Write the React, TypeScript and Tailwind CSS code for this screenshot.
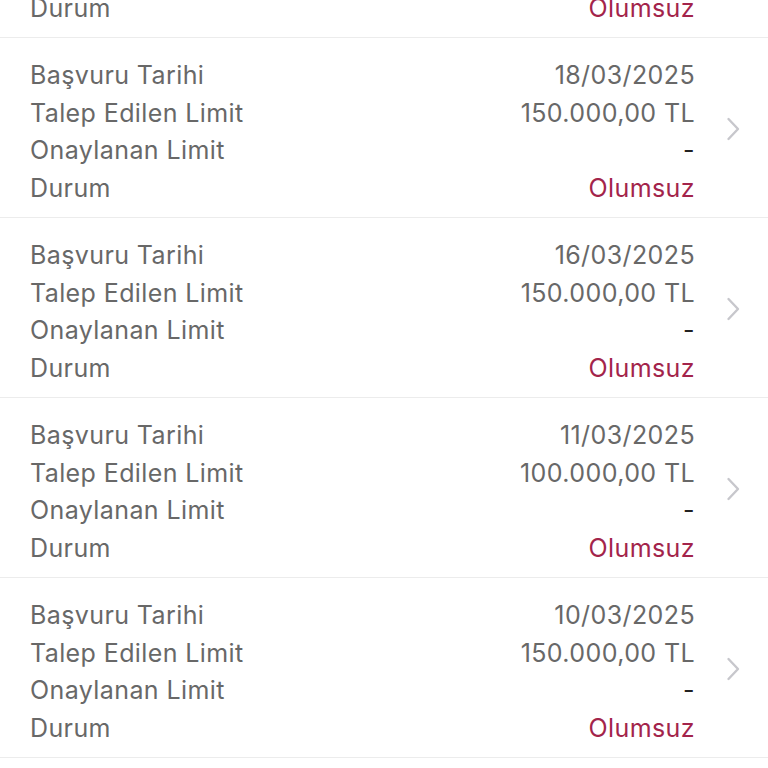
import React from "react";

type Item = { date: string; requested: string };

const items: Item[] = [
  { date: "20/03/2025", requested: "150.000,00 TL" },
  { date: "18/03/2025", requested: "150.000,00 TL" },
  { date: "16/03/2025", requested: "150.000,00 TL" },
  { date: "11/03/2025", requested: "100.000,00 TL" },
  { date: "10/03/2025", requested: "150.000,00 TL" },
];

function Chevron() {
  return (
    <svg width="16" height="24" viewBox="0 0 16 24" fill="none">
      <path d="M3.5 2 L13 12 L3.5 22" stroke="#c7c7cc" strokeWidth="2.4" strokeLinecap="round" strokeLinejoin="round" />
    </svg>
  );
}

function Row({ item }: { item: Item }) {
  return (
    <div className="flex items-center border-b border-[#ececec] bg-white pl-[30px]">
      <div className="flex-1 pt-[19px] pb-[10px] text-[25px] leading-[37.5px] tracking-[0.4px]">
        <div className="flex justify-between">
          <span className="text-[#686868]">Başvuru Tarihi</span>
          <span className="text-[#686868]">{item.date}</span>
        </div>
        <div className="flex justify-between">
          <span className="text-[#686868]">Talep Edilen Limit</span>
          <span className="text-[#686868]">{item.requested}</span>
        </div>
        <div className="flex justify-between">
          <span className="text-[#686868]">Onaylanan Limit</span>
          <span className="text-[#222222]">-</span>
        </div>
        <div className="flex justify-between">
          <span className="text-[#686868]">Durum</span>
          <span className="text-[#a3244b]">Olumsuz</span>
        </div>
      </div>
      <div className="flex w-[73px] justify-center pl-[2px] pt-[3px]">
        <Chevron />
      </div>
    </div>
  );
}

export default function App() {
  return (
    <div
      className="h-[768px] w-[768px] overflow-hidden bg-white"
      style={{ fontFamily: "Inter, 'Liberation Sans', sans-serif" }}
    >
      <div className="-mt-[142px]">
        {items.map((it, i) => (
          <Row key={i} item={it} />
        ))}
      </div>
    </div>
  );
}
